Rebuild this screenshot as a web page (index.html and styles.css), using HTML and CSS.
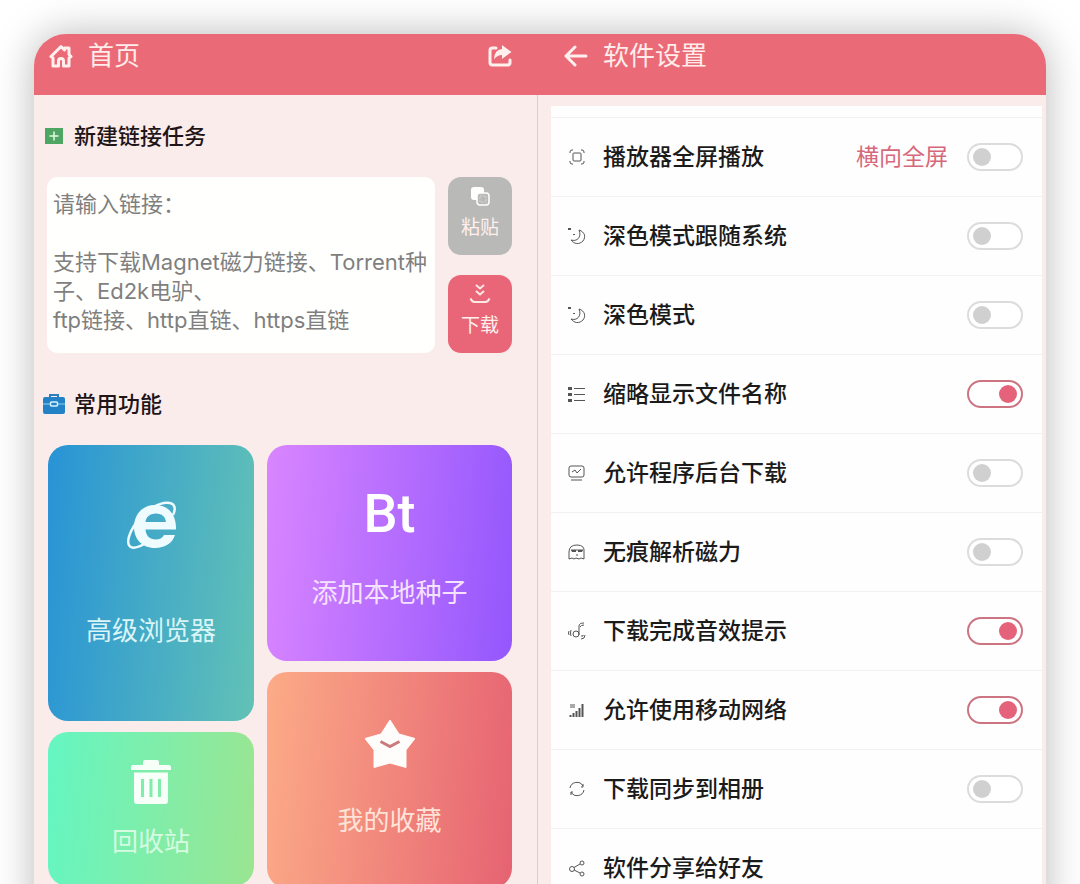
FILE: index.html
```html
<!DOCTYPE html>
<html lang="zh-CN">
    <head>
        <meta charset="UTF-8">
        <meta name="viewport" content="width=device-width, initial-scale=1.0">
        <title>首页</title>
        <link rel="stylesheet" href="styles.css">
    </head>
    <body>
        <div class="frame">
            <main class="home">
                <header class="topbar">
                    <svg class="top-icon" viewBox="0 0 24 24"><path d="M2 12.500 12 2.500l3.500 3.500V4H20v6.500l2 2-2 1.500v8h-5.500v-5a2.500 2.500 0 0 0-5 0v5H4v-8z"/></svg>
                    <h1>首页</h1>
                    <button class="icon-button share" aria-label="分享">
                        <svg class="top-icon" viewBox="0 0 24 24"><path d="M8 4H4.500Q2 4 2 6.500v12Q2 21 4.500 21h15q2.500 0 2.500-2.500V16"/><path class="solid" d="M14 1l9.500 7-9.500 7v-4q-5 0-8 4.500Q6 6 14 5z"/></svg>
                    </button>
                </header>

                <div class="home-body">
                    <h2>
                        <svg class="head-icon" viewBox="0 0 22 22"><path fill="#4fa564" d="M2 3h18v16H2z"/><path stroke="#e4fbe0" stroke-width="1.500" d="M11 6.500v9M6.500 11h9"/></svg>
                        <label for="link">新建链接任务</label>
                    </h2>
                    <div class="task">
                        <textarea id="link" placeholder="请输入链接：&#10;&#10;支持下载Magnet磁力链接、Torrent种子、Ed2k电驴、&#10;ftp链接、http直链、https直链"></textarea>
                        <div class="task-buttons">
                            <button class="paste">
                                <svg viewBox="0 0 22 22"><rect x="2" y="2" width="13" height="13" rx="3" fill="#fff"/><rect x="8" y="8" width="12" height="12" rx="3" fill="#b9bab8" stroke="#fff" stroke-width="1.500"/><path d="M11 11h6v6h-6z" fill="none" stroke="#d4d4d2" stroke-dasharray="2 1"/></svg>
                                粘贴
                            </button>
                            <button class="download">
                                <svg viewBox="0 0 22 22" fill="none" stroke="#ffe9e6" stroke-width="2"><path d="M7 2l4 3.500L15 2M7 8l4 3.500L15 8M1.500 15.500q1.500 3.500 4 3.500h11q2.500 0 4-3.500"/></svg>
                                下载
                            </button>
                        </div>
                    </div>

                    <h2 class="second">
                        <svg class="head-icon" viewBox="0 0 22 22"><path d="M7 5V2h8v3" fill="none" stroke="#2a80bd" stroke-width="2"/><rect y="4" width="22" height="17" rx="2" fill="#2382c5"/><path d="M0 11h22" stroke="#8fd0f2"/><rect x="7.500" y="9" width="7" height="4" rx="1" fill="#2382c5" stroke="#d6f2ff" stroke-width="1.500"/></svg>
                        常用功能
                    </h2>
                    <div class="cards">
                        <div class="column narrow">
                            <a href="#" class="card browser">
                                <svg viewBox="0 0 50 50">
                                    <path fill="#effcff" fill-rule="evenodd" d="M50 29.500H19.500C20 36 24 39.500 29.500 39.500c4 0 7-1.500 8.500-4.500h11C46.500 43 39 48 29 48 16 48 8 39 8 27S16 5 29 5s21.500 9 21 24.500zM19.500 22H40c-.5-5-4-8.500-10-8.500S20 17 19.500 22z"/>
                                    <path fill="none" stroke="#effcff" stroke-width="2.500" d="M47 15c3-6 2-11-3-12C35 1 20 9 10 23 3 33 0 43 4 46.500c3 2.500 9 .5 15-3"/>
                                </svg>
                                高级浏览器
                            </a>
                            <a href="#" class="card recycle">
                                <svg viewBox="0 0 50 50" fill="#f6fff8">
                                    <path d="M17 5q0-2 2-2h12q2 0 2 2v3h10q2 0 2 2v3H5v-3q0-2 2-2h10z"/>
                                    <path fill-rule="evenodd" d="M8 15.500h34V44q0 3-3 3H11q-3 0-3-3zM15 22v18h3V22zm8.500 0v18h3V22zm8.500 0v18h3V22z"/>
                                </svg>
                                回收站
                            </a>
                        </div>
                        <div class="column wide">
                            <a href="#" class="card torrent">
                                <span class="bt">Bt</span>
                                添加本地种子
                            </a>
                            <a href="#" class="card favorite">
                                <svg viewBox="0 0 50 50"><path fill="#fffdfb" stroke="#fffdfb" stroke-linejoin="round" d="M25 1l9 14 16 4.500-9 11.500v17.500L25 44 9 48.500V31L0 19.500 16 15z"/><path fill="none" stroke="#c97a7b" stroke-width="3" d="M15.500 22.500l9.500 5 9.500-5"/></svg>
                                我的收藏
                            </a>
                        </div>
                    </div>
                </div>
            </main>

            <section class="settings">
                <header class="topbar">
                    <button class="icon-button" aria-label="返回">
                        <svg class="top-icon" viewBox="0 0 24 24"><path d="M22 12H2M11 3 2 12l9 9"/></svg>
                    </button>
                    <h1>软件设置</h1>
                </header>

                <div class="list">
                    <label class="row">
                        <svg viewBox="0 0 18 18"><path d="M2 5V4q0-2 2-2h1M13 2h1q2 0 2 2v1M16 13v1q0 2-2 2h-1M5 16H4q-2 0-2-2v-1"/><rect x="5" y="5" width="8" height="8" rx="1"/></svg>
                        <span class="name">播放器全屏播放</span>
                        <span class="value">横向全屏</span>
                        <input type="checkbox">
                    </label>
                    <label class="row">
                        <svg viewBox="0 0 18 18"><path d="M11 3c6 2 7 7 4 11-4 4-9 3-12-1 6 2 11-3 8-10z"/><path class="dot" d="M0 1h3v2H0zM5 7h2v1H5z"/></svg>
                        <span class="name">深色模式跟随系统</span>
                        <input type="checkbox">
                    </label>
                    <label class="row">
                        <svg viewBox="0 0 18 18"><path d="M11 3c6 2 7 7 4 11-4 4-9 3-12-1 6 2 11-3 8-10z"/><path class="dot" d="M0 1h3v2H0zM5 7h2v1H5z"/></svg>
                        <span class="name">深色模式</span>
                        <input type="checkbox">
                    </label>
                    <label class="row">
                        <svg viewBox="0 0 18 18"><path d="M6 3.500h11M6 9.500h11M6 15.500h11"/><path class="dot" d="M0 2h4v3H0zM0 8h4v3H0zM0 14h4v3H0z"/></svg>
                        <span class="name">缩略显示文件名称</span>
                        <input type="checkbox" checked>
                    </label>
                    <label class="row">
                        <svg viewBox="0 0 18 18"><rect x="1" y="2" width="15" height="11" rx="2"/><path d="M4 8l3-2 2 3 4-4M3 16h11"/></svg>
                        <span class="name">允许程序后台下载</span>
                        <input type="checkbox">
                    </label>
                    <label class="row">
                        <svg viewBox="0 0 18 18"><path d="M1 16V9q0-7 8-7t7 7v7l-3-1-2 1-3-1-2 1-2-1zM3 7h12M8 12h2"/><path class="dot" d="M3 7h5v2H4zM10 7h5l-1 2h-4z"/></svg>
                        <span class="name">无痕解析磁力</span>
                        <input type="checkbox">
                    </label>
                    <label class="row">
                        <svg viewBox="0 0 18 18"><circle cx="8" cy="12" r="3"/><path d="M11 13V4q0-3 5-3M12 5q1-2 4-2M3 8q-1 3 0 6M1 9q-1 2 0 4M13 14h2v-1M13 17q4 0 4-4"/></svg>
                        <span class="name">下载完成音效提示</span>
                        <input type="checkbox" checked>
                    </label>
                    <label class="row">
                        <svg viewBox="0 0 18 18"><path class="bars" d="M2.500 16v-2M5.500 16v-4M8.500 16v-6M11.500 16V7M14.500 16V3"/><path d="M2 4h5M2 6h5"/></svg>
                        <span class="name">允许使用移动网络</span>
                        <input type="checkbox" checked>
                    </label>
                    <label class="row">
                        <svg viewBox="0 0 18 18"><path d="M2 8a7 7 0 0 1 13-2M15 4v3h-2M16 10a7 7 0 0 1-13 2M3 15v-3h2"/></svg>
                        <span class="name">下载同步到相册</span>
                        <input type="checkbox">
                    </label>
                    <a href="#" class="row">
                        <svg viewBox="0 0 18 18"><circle cx="4" cy="10" r="2.500"/><circle cx="14" cy="4" r="2"/><circle cx="14" cy="15" r="2"/><path d="M6 8.500l6-3.500M6 11l6 3"/></svg>
                        <span class="name">软件分享给好友</span>
                    </a>
                </div>
            </section>
        </div>
    </body>
</html>
```

FILE: styles.css
```css
* {
    box-sizing: border-box;
}

body {
    margin: 0;
    height: 100vh;
    padding: 34px 34px 0;
    overflow: hidden;
    background: #fff;
    font-family: Inter, "Noto Sans CJK SC", sans-serif;
}

h1,
h2 {
    margin: 0;
}

a {
    color: inherit;
    text-decoration: none;
}

button {
    border: 0;
    padding: 0;
    font-family: inherit;
    cursor: pointer;
}

/* runs on below the fold so the side shadows do not fade out */
.frame {
    display: flex;
    height: calc(100% + 60px);
    overflow: hidden;
    border-radius: 32px 32px 0 0;
    background: #fbecec;
    box-shadow: 0 0 40px rgba(0, 0, 0, 0.28);
}

.home,
.settings {
    min-width: 0;
}

.home {
    flex: 503;
    box-shadow: 1px 0 0 rgba(150, 60, 80, 0.2);
}

.settings {
    flex: 509;
}

/* top bars */
.topbar {
    display: flex;
    align-items: center;
    gap: 15px;
    height: 61px;
    padding: 0 25px 17px 15px;
    background: #ea6b77;
    color: #ffeceb;
}

.settings .topbar {
    padding-left: 27px;
}

.topbar h1 {
    font-size: 26px;
    line-height: 36px;
    font-weight: 400;
}

.icon-button {
    display: flex;
    background: none;
}

.share {
    margin-left: auto;
}

.top-icon {
    width: 24px;
    height: 24px;
    fill: none;
    stroke: #fff0ee;
    stroke-width: 3;
    stroke-linejoin: round;
    stroke-linecap: round;
}

.top-icon .solid {
    fill: #fff0ee;
    stroke: none;
}

/* home */
.home-body {
    padding: 0 25px 0 9px;
}

h2 {
    display: flex;
    align-items: center;
    gap: 9px;
    margin: 25px 0;
    font-size: 22px;
    line-height: 32px;
    font-weight: 500;
    color: #1f1517;
}

h2.second {
    margin-top: 35px;
}

.head-icon {
    width: 22px;
    height: 22px;
}

.task {
    display: flex;
    gap: 13px;
    padding-left: 4px;
}

textarea {
    flex: 1;
    min-width: 0;
    height: 176px;
    padding: 13px 6px 11px;
    border: 0;
    border-radius: 10px;
    background: #fffffd;
    font-family: inherit;
    font-size: 22px;
    line-height: 29px;
    resize: none;
    overflow: hidden;
}

textarea::placeholder {
    color: #7f7f7f;
}

.task-buttons {
    display: flex;
    flex-direction: column;
    gap: 20px;
}

.task-buttons button {
    display: flex;
    flex-direction: column;
    align-items: center;
    gap: 7px;
    width: 64px;
    height: 78px;
    padding-top: 8px;
    border-radius: 13px;
    color: #fff0ee;
    font-size: 19px;
    line-height: 28px;
}

.task-buttons svg {
    width: 22px;
    height: 22px;
}

.paste {
    background: #b9bab8;
}

.download {
    background: #e96678;
}

.cards {
    display: flex;
    gap: 13px;
    padding-left: 5px;
}

.column {
    display: flex;
    flex-direction: column;
    gap: 11px;
}

.narrow {
    flex: 206;
}

.wide {
    flex: 245;
}

.card {
    display: flex;
    flex-direction: column;
    align-items: center;
    border-radius: 20px;
    font-size: 26px;
    line-height: 36px;
}

.card svg {
    width: 50px;
    height: 50px;
}

.browser {
    height: 276px;
    padding-top: 55px;
    gap: 63px;
    background: linear-gradient(95deg, #2893d6, #62c2b6);
    color: #daf5f7;
}

.recycle {
    height: 154px;
    padding-top: 25px;
    gap: 17px;
    background: linear-gradient(95deg, #64f6c2, #9ae591);
    color: #d6fbe2;
}

.torrent {
    height: 216px;
    padding-top: 42px;
    gap: 34px;
    background: linear-gradient(95deg, #d985ff, #9457fd);
    color: #f5e2ff;
}

.favorite {
    height: 216px;
    padding-top: 47px;
    gap: 34px;
    background: linear-gradient(95deg, #fcab87, #e66372);
    color: #ffe3d9;
}

.bt {
    font-family: Roboto, sans-serif;
    font-size: 54px;
    line-height: 54px;
    font-weight: 500;
    color: #fff;
}

/* settings */
.list {
    margin: 11px 4px 0 14px;
    padding-top: 11px;
    background: #fffefe;
}

.row {
    display: flex;
    align-items: center;
    height: 79px;
    padding: 0 19px 0 17px;
    border-top: 1px solid #f3f0f0;
}

.row svg {
    width: 18px;
    height: 18px;
    margin-right: 17px;
    fill: none;
    stroke: #555;
}

.row .dot {
    fill: #555;
    stroke: none;
}

.row .bars {
    stroke-width: 2;
}

.name {
    flex: 1;
    font-size: 23px;
    line-height: 32px;
    font-weight: 500;
    color: #1b1b1b;
}

.value {
    margin-right: 19px;
    font-size: 23px;
    line-height: 32px;
    color: #d5697b;
}

.row input {
    appearance: none;
    display: flex;
    align-items: center;
    width: 56px;
    height: 28px;
    margin: 0;
    padding: 0 4px;
    border: 2px solid #dcdcdc;
    border-radius: 14px;
    background: #fff;
}

.row input::before {
    content: "";
    width: 18px;
    height: 18px;
    border-radius: 50%;
    background: #d0d0d0;
}

.row input:checked {
    justify-content: flex-end;
    border-color: #cd7482;
}

.row input:checked::before {
    background: #e4627a;
}
```
